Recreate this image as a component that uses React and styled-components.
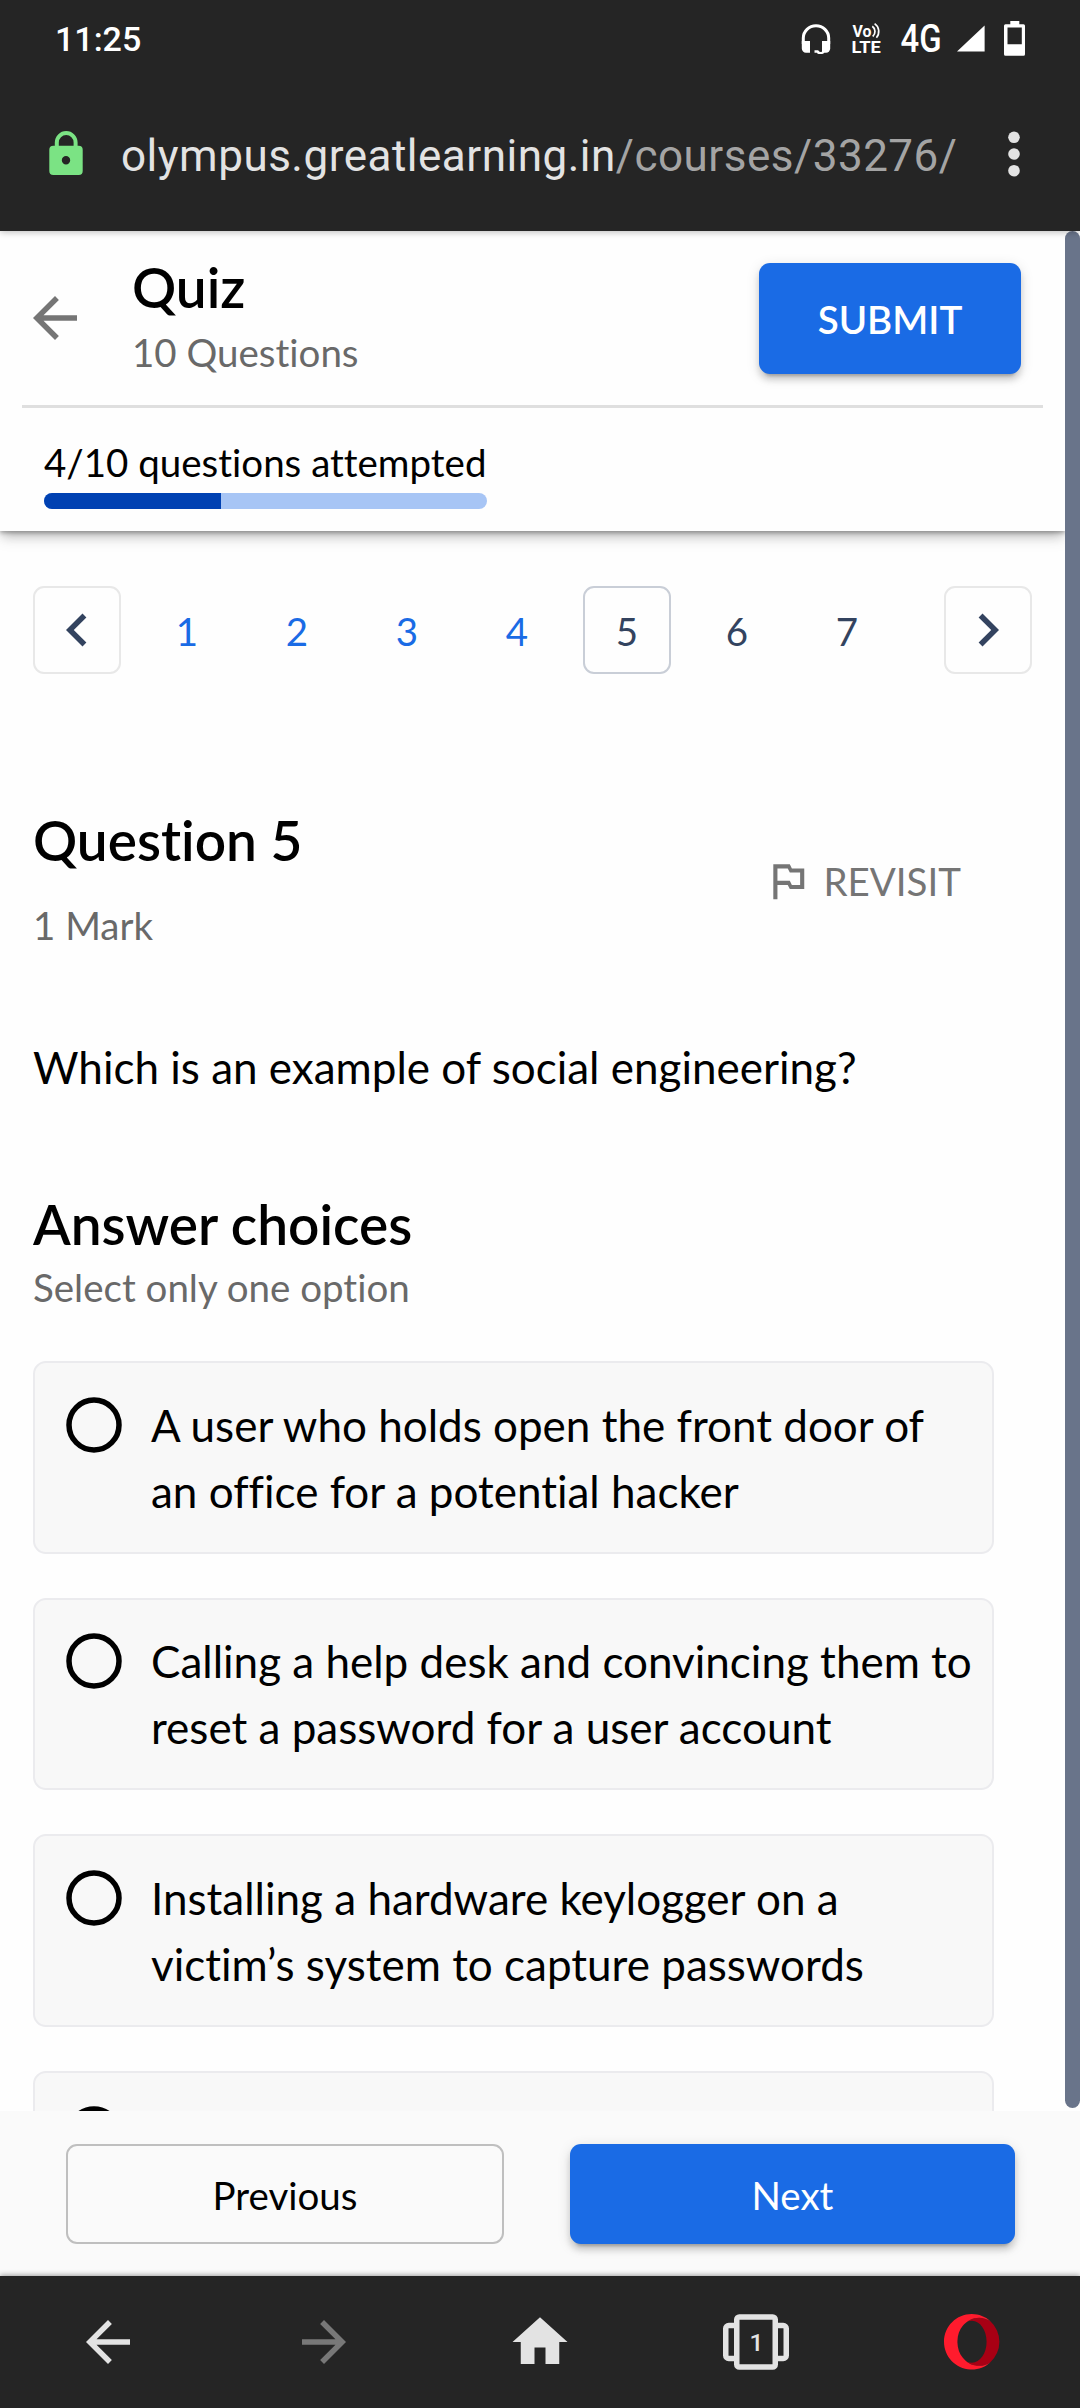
import React from "react";
import styled, { createGlobalStyle, css } from "styled-components";

const color = {
  chrome: "#252525",
  chromeIcon: "#e3e3e3",
  blue: "#1a6be5",
  navy: "#33435f",
  muted: "#696969",
  grey: "#757575",
};

const GlobalStyle = createGlobalStyle`
  *, *::before, *::after { box-sizing: border-box; }
  body { margin: 0; background: #fefefe; }
  svg { display: block; flex: none; }
  h1, h2, p, ul { margin: 0; padding: 0; font-weight: 400; }
`;

const Screen = styled.div`
  width: 1080px;
  height: 2408px;
  display: flex;
  flex-direction: column;
  overflow: hidden;
  background: #fefefe;
  font-family: Lato, "Liberation Sans", sans-serif;
  font-variant-ligatures: none;
  color: #000;
`;

/* ---------- browser chrome ---------- */

const TopChrome = styled.div`
  flex: none;
  height: 231px;
  display: flex;
  flex-direction: column;
  background: ${color.chrome};
  font-family: Roboto, sans-serif;
  position: relative;
  z-index: 3;
  box-shadow: 0 1px 7px rgba(0, 0, 0, 0.28);
`;

const StatusBar = styled.div`
  height: 76px;
  padding: 18px 55px 0;
  display: flex;
  justify-content: space-between;
  color: #fff;
`;

const Clock = styled.span`
  font-size: 34px;
  font-weight: 500;
  line-height: 42px;
`;

const StatusIcons = styled.div`
  display: flex;
  align-items: flex-start;
`;

const IconSlot = styled.div`
  margin-left: ${(p) => p.$gap}px;
`;

const StatusText = styled.text`
  font-family: Roboto, sans-serif;
  font-weight: ${(p) => p.$weight};
  font-size: ${(p) => p.$size}px;
  fill: ${(p) => p.$fill || "#fff"};
`;

const AddressBar = styled.div`
  flex: 1;
  display: flex;
  align-items: flex-start;
  padding: 46px 59px 0 48px;
`;

const Url = styled.div`
  margin: 4px 0 0 36px;
  flex: 1;
  font-size: 44px;
  line-height: 60px;
  letter-spacing: 0.5px;
  white-space: nowrap;
  color: ${color.chromeIcon};
`;

const UrlPath = styled.span`
  color: #a4a4a4;
`;

/* ---------- page ---------- */

const Viewport = styled.div`
  flex: none;
  height: 1880px;
  display: flex;
  overflow: hidden;
`;

const Page = styled.div`
  width: 1065px;
  display: flex;
  flex-direction: column;
`;

const ScrollTrack = styled.div`
  width: 15px;
  display: flex;
  align-items: flex-start;
`;

const ScrollThumb = styled.div`
  width: 15px;
  height: 1877px;
  border-radius: 8px;
  background: #69748a;
`;

const QuizHeader = styled.header`
  flex: none;
  height: 300px;
  background: #fefefe;
  box-shadow: 0 6px 11px -3px rgba(0, 0, 0, 0.24), 0 8px 14px rgba(0, 0, 0, 0.1),
    0 2px 4px rgba(0, 0, 0, 0.26);
  clip-path: inset(0 0 -40px 0);
`;

const TitleBar = styled.div`
  height: 174px;
  display: flex;
  align-items: center;
  padding: 0 44px 0 22px;
`;

const TitleBlock = styled.div`
  align-self: flex-start;
  margin: 23px auto 0 44px;
`;

const Heading = styled.h2`
  font-size: 55px;
  font-weight: 600;
  line-height: 66px;
`;

const Caption = styled.p`
  margin-top: ${(p) => p.$top}px;
  font-size: 38.5px;
  line-height: 54px;
  color: ${color.muted};
`;

const Button = styled.button`
  display: flex;
  align-items: center;
  justify-content: center;
  width: ${(p) => p.$width}px;
  height: ${(p) => p.$height}px;
  padding: 2px 0 0;
  border: 0;
  border-radius: 11px;
  font-family: inherit;
  font-size: 38.5px;
  font-weight: ${(p) => p.$weight || 400};
  line-height: 50px;
  ${(p) =>
    p.$primary
      ? css`
          color: #fff;
          background: ${color.blue};
          box-shadow: 0 8px 3px -6px rgba(0, 0, 0, 0.2),
            0 6px 6px rgba(0, 0, 0, 0.14), 0 3px 14px rgba(0, 0, 0, 0.12);
        `
      : css`
          color: #000;
          background: transparent;
          border: 2px solid #bfbfbf;
        `}
`;

const Divider = styled.div`
  height: 3px;
  margin: 0 22px;
  background: #dfdfdf;
`;

const Progress = styled.div`
  margin: 31px 0 0 44px;
  width: 443px;
`;

const ProgressLabel = styled.p`
  font-size: 38.5px;
  line-height: 46px;
  white-space: nowrap;
`;

const ProgressTrack = styled.div`
  margin-top: 8px;
  height: 16px;
  border-radius: 8px;
  overflow: hidden;
  background: #a7c5f5;
`;

const ProgressFill = styled.div`
  height: 100%;
  background: #0041b2;
`;

const Content = styled.main`
  flex: 1;
  min-height: 0;
  overflow: hidden;
  padding: 55px 33px 0;
`;

const Pager = styled.nav`
  display: flex;
  justify-content: space-between;
`;

const PageNumbers = styled.div`
  display: flex;
  gap: 22px;
`;

const PageCell = styled.div`
  width: 88px;
  height: 88px;
  display: flex;
  align-items: center;
  justify-content: center;
  border: 2px solid ${(p) => p.$border || "transparent"};
  border-radius: 11px;
  color: ${(p) => (p.$answered ? color.blue : color.navy)};
`;

const PageDigit = styled.span`
  font-size: 38.5px;
  line-height: 50px;
  padding-top: 2px;
`;

const QuestionHead = styled.div`
  margin-top: 133px;
  display: flex;
  justify-content: space-between;
  align-items: center;
  padding-right: 71px;
`;

const Revisit = styled.div`
  display: flex;
  align-items: center;
  gap: 11px;
  margin-top: 2px;
  font-size: 38.5px;
  line-height: 58px;
  color: ${color.grey};
`;

const Prompt = styled.p`
  margin-top: 82px;
  font-size: 44px;
  line-height: 66px;
`;

const Section = styled.section`
  margin-top: 91px;
`;

const Options = styled.ul`
  margin-top: 47.3px;
  display: flex;
  flex-direction: column;
  gap: 44px;
  padding-right: 38.5px;
  list-style: none;
`;

const Option = styled.li`
  flex: none;
  height: 192.5px;
  display: flex;
  padding: 28.6px 0 0 31px;
  gap: 29px;
  border: 2px solid #ebebee;
  border-radius: 13px;
  background: #f8f8f8;
`;

const RadioMark = styled.svg`
  margin-top: 5px;
`;

const OptionText = styled.span`
  width: 825px;
  font-size: 44px;
  line-height: 66px;
`;

const FooterBar = styled.footer`
  flex: none;
  height: 165px;
  display: flex;
  justify-content: space-between;
  padding: 33px 65px 0 66px;
  background: #fafafa;
`;

const BottomNav = styled.nav`
  flex: none;
  height: 132px;
  display: grid;
  grid-template-columns: repeat(5, 1fr);
  place-items: center;
  background: ${color.chrome};
  color: ${color.chromeIcon};
  position: relative;
  z-index: 3;
  box-shadow: 0 -1px 5px rgba(0, 0, 0, 0.36);
`;

/* ---------- icons ---------- */

const Glyph = ({ d, size = 66, fill = "currentColor" }) => (
  <svg width={size} height={size} viewBox="0 0 24 24" fill={fill}>
    <path d={d} />
  </svg>
);

const ARROW_BACK = "M20 11H7.83l5.59-5.59L12 4l-8 8 8 8 1.41-1.41L7.83 13H20v-2z";
const ARROW_FORWARD = "M12 4l-1.41 1.41L16.17 11H4v2h12.17l-5.58 5.59L12 20l8-8z";
const CHEVRON_LEFT = "M15.41 7.41L14 6l-6 6 6 6 1.41-1.41L10.83 12z";
const CHEVRON_RIGHT = "M10 6L8.59 7.41 13.17 12l-4.58 4.59L10 18l6-6z";
const FLAG = "M14 6l-1-2H5v17h2v-7h5l1 2h7V6h-6zm4 8h-4l-1-2H7V6h5l1 2h5v6z";
const HOME = "M10 20v-6h4v6h5v-8h3L12 3 2 12h3v8z";

const HeadsetIcon = () => (
  <svg width="30" height="40" viewBox="0 0 30 40" fill="#fff">
    <path d="M2.3 26V20A12.7 12.2 0 0 1 27.7 20V26" fill="none" stroke="#fff" strokeWidth="3" />
    <path d="M.8 23H9v11.7H5A4.2 4.2 0 0 1 .8 30.5z" />
    <path d="M21 23h8.2v7.5a4.2 4.2 0 0 1-4.2 4.2h-4z" />
    <path d="M13.5 32.3h3.6l1.8 1.6 4.6-.4a2.4 2.4 0 0 1-2.2 2.4h-3.6a1.900 1.900 0 0 1-1.700-1.200h-2.500z" />
  </svg>
);

const VolteIcon = () => (
  <svg width="32" height="40" viewBox="0 0 32 40">
    <StatusText x="1.5" y="19" $size={16.5} $weight={700} textLength="19" lengthAdjust="spacingAndGlyphs">Vo</StatusText>
    <StatusText x=".4" y="34.7" $size={17} $weight={700} textLength="29.5" lengthAdjust="spacingAndGlyphs">LTE</StatusText>
    <g fill="none" stroke="#fff" strokeWidth="1.7">
      <path d="M21.3 8.3a6.5 6.5 0 0 1 .4 10.2" />
      <path d="M23.6 5.6a9.5 9.5 0 0 1 1.8 14.1" />
    </g>
  </svg>
);

const NetworkLabel = () => (
  <svg width="50" height="48" viewBox="0 0 50 48">
    <StatusText x=".6" y="33.7" $size={38.5} $weight={500} textLength="41" lengthAdjust="spacingAndGlyphs">4G</StatusText>
  </svg>
);

const SignalIcon = () => (
  <svg width="28" height="40" viewBox="0 0 28 40" fill="#fff">
    <path d="M0 33.5 27.6 7.5v26z" />
  </svg>
);

const BatteryIcon = () => (
  <svg width="21" height="40" viewBox="0 0 21 40" fill="#fff" fillRule="evenodd">
    <path d="M6.300 3h9v3.300h4.200A1.500 1.500 0 0 1 21 7.800V36.200a1.500 1.500 0 0 1-1.500 1.500h-18A1.500 1.500 0 0 1 0 36.200V7.800A1.500 1.500 0 0 1 1.500 6.300h4.800zM3.500 9.500v16.700h14.300V9.500z" />
  </svg>
);

const LockIcon = () => (
  <svg width="37" height="54" viewBox="0 0 37 54">
    <path d="M8.800 27V20.500a9.400 9.400 0 0 1 18.800 0V27" fill="none" stroke="#7be384" strokeWidth="4" />
    <path fill="#7be384" fillRule="evenodd" d="M5.300 23.800h25.400a4 4 0 0 1 4 4v21.200a4 4 0 0 1-4 4H5.300a4 4 0 0 1-4-4V27.800a4 4 0 0 1 4-4zM18 34a4.200 4.200 0 1 0 0 8.400 4.200 4.200 0 0 0 0-8.400z" />
  </svg>
);

const MoreIcon = () => (
  <svg width="14" height="60" viewBox="0 0 14 60" fill={color.chromeIcon}>
    {[15.3, 32, 48.7].map((y) => (
      <circle key={y} cx="7" cy={y} r="5.8" />
    ))}
  </svg>
);

const TabsIcon = () => (
  <svg width="66" height="56" viewBox="0 0 66 56" fill="none" stroke="currentColor" strokeWidth="5.5">
    <path d="M11 11.500H5.750A3 3 0 0 0 2.750 14.500V41.500A3 3 0 0 0 5.750 44.500H11M55 11.500h5.250A3 3 0 0 1 63.250 14.500V41.500A3 3 0 0 1 60.250 44.500H55" />
    <rect x="13.75" y="3" width="38.5" height="50" rx="2.5" />
    <StatusText x="26.4" y="36.8" $size={24.5} $weight={500} $fill="currentColor" stroke="none">1</StatusText>
  </svg>
);

const OperaIcon = () => (
  <svg width="55.5" height="55.5" viewBox="0 0 24 24">
    <path
      fill="#a80014"
      d="M19.953 3.055A12 12 0 0 1 19.953 20.945C18.500 21.950 16.900 22.416 15.190 22.416C13.300 22.416 11.500 21.800 9.900 20.600C10.600 20.900 11.300 21.050 12.100 21.050C15.600 21.050 18.420 17 18.420 12S15.600 2.950 12.100 2.950C11.300 2.950 10.600 3.100 9.900 3.400C11.500 2.200 13.300 1.584 15.190 1.584C16.900 1.584 18.500 2.050 19.953 3.055z"
    />
    <path
      fill="#ff1b2d"
      d="M8.051 5.238c-1.328 1.566-2.186 3.883-2.246 6.480v.564c.061 2.598.918 4.912 2.246 6.479 1.721 2.236 4.279 3.654 7.139 3.654 1.756 0 3.400-.537 4.807-1.471C17.879 22.846 15.074 24 12 24c-.192 0-.383-.004-.570-.014C5.064 23.689 0 18.436 0 12 0 5.371 5.373 0 12 0h.045c3.055.012 5.840 1.166 7.953 3.055-1.408-.930-3.051-1.471-4.810-1.471-2.858 0-5.417 1.420-7.140 3.654h.003z"
    />
  </svg>
);

const Radio = () => (
  <RadioMark width="56" height="56" viewBox="0 0 56 56">
    <circle cx="28" cy="28" r="25" fill="none" stroke="#000" strokeWidth="5.5" />
  </RadioMark>
);

/* ---------- data ---------- */

const pages = [1, 2, 3, 4, 5, 6, 7];
const current = 5;
const attempted = 4;
const total = 10;

const options = [
  "A user who holds open the front door of an office for a potential hacker",
  "Calling a help desk and convincing them to reset a password for a user account",
  "Installing a hardware keylogger on a victim’s system to capture passwords",
  "",
];

export default function App() {
  return (
    <Screen>
      <GlobalStyle />
      <TopChrome>
        <StatusBar>
          <Clock>11:25</Clock>
          <StatusIcons>
            <HeadsetIcon />
            <IconSlot $gap={20}><VolteIcon /></IconSlot>
            <IconSlot $gap={17}><NetworkLabel /></IconSlot>
            <IconSlot $gap={7}><SignalIcon /></IconSlot>
            <IconSlot $gap={19}><BatteryIcon /></IconSlot>
          </StatusIcons>
        </StatusBar>
        <AddressBar>
          <LockIcon />
          <Url>
            olympus.greatlearning.in<UrlPath>/courses/33276/</UrlPath>
          </Url>
          <MoreIcon />
        </AddressBar>
      </TopChrome>

      <Viewport>
        <Page>
          <QuizHeader>
            <TitleBar>
              <Glyph d={ARROW_BACK} fill={color.grey} />
              <TitleBlock>
                <Heading>Quiz</Heading>
                <Caption $top={5}>10 Questions</Caption>
              </TitleBlock>
              <Button $primary $width={262} $height={111} $weight={600}>SUBMIT</Button>
            </TitleBar>
            <Divider />
            <Progress>
              <ProgressLabel>4/10 questions attempted</ProgressLabel>
              <ProgressTrack>
                <ProgressFill style={{ width: `${(attempted / total) * 100}%` }} />
              </ProgressTrack>
            </Progress>
          </QuizHeader>

          <Content>
            <Pager>
              <PageNumbers>
                <PageCell $border="#e8e8e8"><Glyph d={CHEVRON_LEFT} /></PageCell>
                {pages.map((n) => (
                  <PageCell key={n} $answered={n <= attempted} $border={n === current ? "#c9ced7" : undefined}>
                    <PageDigit>{n}</PageDigit>
                  </PageCell>
                ))}
              </PageNumbers>
              <PageCell $border="#e8e8e8"><Glyph d={CHEVRON_RIGHT} /></PageCell>
            </Pager>

            <QuestionHead>
              <div>
                <Heading>Question 5</Heading>
                <Caption $top={25}>1 Mark</Caption>
              </div>
              <Revisit>
                <Glyph d={FLAG} size={49.5} />
                REVISIT
              </Revisit>
            </QuestionHead>

            <Prompt>Which is an example of social engineering?</Prompt>

            <Section>
              <Heading>Answer choices</Heading>
              <Caption $top={3}>Select only one option</Caption>
              <Options>
                {options.map((text, i) => (
                  <Option key={i}>
                    <Radio />
                    <OptionText>{text}</OptionText>
                  </Option>
                ))}
              </Options>
            </Section>
          </Content>
        </Page>
        <ScrollTrack>
          <ScrollThumb />
        </ScrollTrack>
      </Viewport>

      <FooterBar>
        <Button $width={438} $height={100}>Previous</Button>
        <Button $primary $width={445} $height={100}>Next</Button>
      </FooterBar>

      <BottomNav>
        <Glyph d={ARROW_BACK} />
        <Glyph d={ARROW_FORWARD} fill="#787878" />
        <Glyph d={HOME} />
        <TabsIcon />
        <OperaIcon />
      </BottomNav>
    </Screen>
  );
}
